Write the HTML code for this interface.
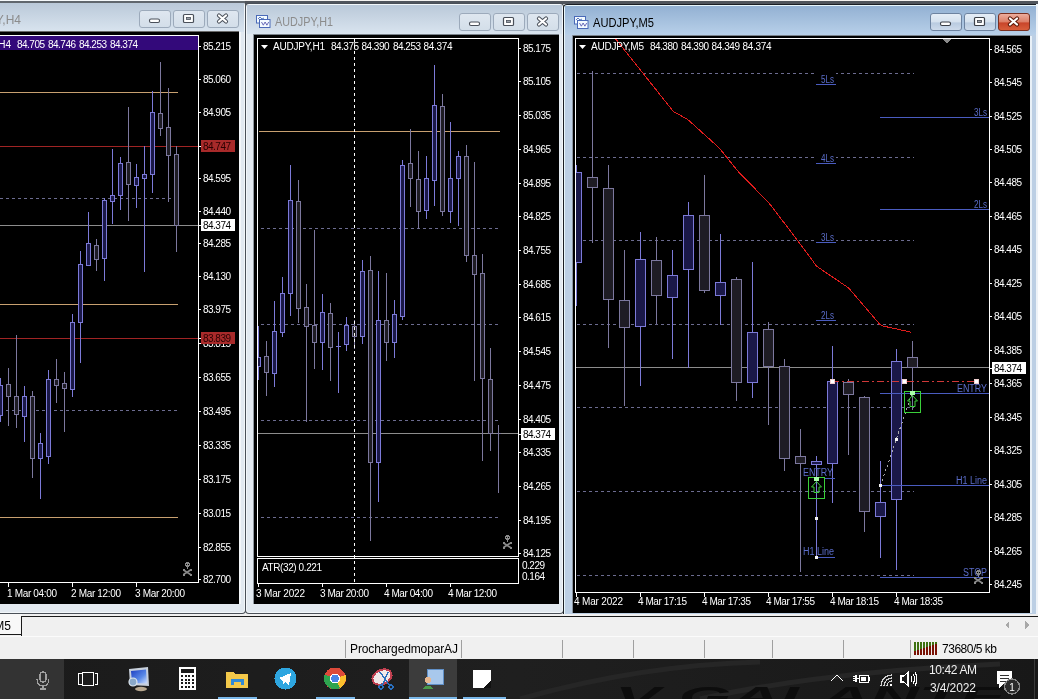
<!DOCTYPE html>
<html><head><meta charset="utf-8"><style>
html,body{margin:0;padding:0;background:#f0f0f0;overflow:hidden}
svg{display:block;will-change:transform}
text{font-family:"Liberation Sans",sans-serif}
</style></head><body>
<svg width="1038" height="699" viewBox="0 0 1038 699" shape-rendering="crispEdges">
<defs>
<linearGradient id="tinact" x1="0" y1="0" x2="0" y2="1"><stop offset="0" stop-color="#bac9d9"/><stop offset="1" stop-color="#d9e4ef"/></linearGradient>
<linearGradient id="tact" x1="0" y1="0" x2="0" y2="1"><stop offset="0" stop-color="#93b1d3"/><stop offset="1" stop-color="#b8d0e9"/></linearGradient>
<linearGradient id="btn" x1="0" y1="0" x2="0" y2="1"><stop offset="0" stop-color="#e6eef7"/><stop offset="0.5" stop-color="#d5e1ee"/><stop offset="0.55" stop-color="#b9cbe0"/><stop offset="1" stop-color="#cfdcec"/></linearGradient>
<linearGradient id="btni" x1="0" y1="0" x2="0" y2="1"><stop offset="0" stop-color="#dfe7f0"/><stop offset="1" stop-color="#d3dee9"/></linearGradient>
<linearGradient id="btnc" x1="0" y1="0" x2="0" y2="1"><stop offset="0" stop-color="#eeb0a0"/><stop offset="0.5" stop-color="#dc7e66"/><stop offset="0.55" stop-color="#c8452a"/><stop offset="1" stop-color="#d9603c"/></linearGradient>
<linearGradient id="topstrip" x1="0" y1="0" x2="0" y2="1"><stop offset="0" stop-color="#f5efea"/><stop offset="0.35" stop-color="#f0eae6"/><stop offset="0.45" stop-color="#2a2c32"/><stop offset="1" stop-color="#3a3c42"/></linearGradient>
<clipPath id="c4"><rect x="0" y="36" width="198" height="546"/></clipPath>
<clipPath id="c1"><rect x="258" y="39" width="260" height="517"/></clipPath>
<clipPath id="c5"><rect x="576" y="39" width="413" height="553"/></clipPath>
</defs>
<rect x="0" y="0" width="1038" height="699" fill="#f0f0f0" />
<rect x="0" y="0" width="1038" height="1" fill="#f4f2f0" />
<rect x="0" y="1" width="1038" height="3" fill="#50555c" />
<rect x="-10" y="1" width="256" height="613" fill="#4a5058" rx="4" shape-rendering="geometricPrecision"/>
<rect x="-9" y="2" width="254" height="611" fill="#f2f6f9" rx="3" shape-rendering="geometricPrecision"/>
<rect x="-8" y="3" width="252" height="609" fill="#e2e9f0" rx="2" shape-rendering="geometricPrecision"/>
<rect x="-8" y="3" width="252" height="29" fill="url(#tinact)" />
<text x="21" y="24" font-family="Liberation Sans" font-size="12" fill="#8c8c8c" text-anchor="end" font-weight="normal" >AUDJPY,H4</text>
<rect x="139.5" y="10.5" width="31" height="17" rx="2.5" fill="url(#btni)" stroke="#9caabb" shape-rendering="geometricPrecision"/>
<rect x="149.5" y="19" width="10" height="3.5" rx="1.5" fill="#fff" stroke="#4a505a" stroke-width="1.1" shape-rendering="geometricPrecision"/>
<rect x="173.5" y="10.5" width="31" height="17" rx="2.5" fill="url(#btni)" stroke="#9caabb" shape-rendering="geometricPrecision"/>
<rect x="183.5" y="14.5" width="10" height="8" rx="1" fill="#fff" stroke="#4a505a" stroke-width="1.2" shape-rendering="geometricPrecision"/>
<rect x="186.5" y="17.5" width="4" height="2" fill="#9aa0a8" stroke="#4a505a" stroke-width="0.8" shape-rendering="geometricPrecision"/>
<rect x="207.5" y="10.5" width="31" height="17" rx="2.5" fill="url(#btni)" stroke="#9caabb" shape-rendering="geometricPrecision"/>
<path d="M219,15.5 L226,21.5 M226,15.5 L219,21.5" stroke="#4a505a" stroke-width="4.2" stroke-linecap="round" shape-rendering="geometricPrecision"/>
<path d="M219,15.5 L226,21.5 M226,15.5 L219,21.5" stroke="#fff" stroke-width="2.2" stroke-linecap="round" shape-rendering="geometricPrecision"/>
<rect x="0" y="0" width="245" height="1" fill="#f4f8fa" />
<rect x="0" y="1" width="245" height="2" fill="#60676e" />
<rect x="245" y="3" width="319" height="611" fill="#4a5058" rx="4" shape-rendering="geometricPrecision"/>
<rect x="246" y="4" width="317" height="609" fill="#f2f6f9" rx="3" shape-rendering="geometricPrecision"/>
<rect x="247" y="5" width="315" height="607" fill="#e2e9f0" rx="2" shape-rendering="geometricPrecision"/>
<rect x="247" y="5" width="315" height="29" fill="url(#tinact)" />
<text x="275" y="26" font-family="Liberation Sans" font-size="12" fill="#8c8c8c" text-anchor="start" font-weight="normal" textLength="58" lengthAdjust="spacingAndGlyphs" >AUDJPY,H1</text>
<rect x="459.5" y="13.5" width="31" height="17" rx="2.5" fill="url(#btni)" stroke="#9caabb" shape-rendering="geometricPrecision"/>
<rect x="469.5" y="22" width="10" height="3.5" rx="1.5" fill="#fff" stroke="#4a505a" stroke-width="1.1" shape-rendering="geometricPrecision"/>
<rect x="493.5" y="13.5" width="31" height="17" rx="2.5" fill="url(#btni)" stroke="#9caabb" shape-rendering="geometricPrecision"/>
<rect x="503.5" y="17.5" width="10" height="8" rx="1" fill="#fff" stroke="#4a505a" stroke-width="1.2" shape-rendering="geometricPrecision"/>
<rect x="506.5" y="20.5" width="4" height="2" fill="#9aa0a8" stroke="#4a505a" stroke-width="0.8" shape-rendering="geometricPrecision"/>
<rect x="527.5" y="13.5" width="31" height="17" rx="2.5" fill="url(#btni)" stroke="#9caabb" shape-rendering="geometricPrecision"/>
<path d="M539,18.5 L546,24.5 M546,18.5 L539,24.5" stroke="#4a505a" stroke-width="4.2" stroke-linecap="round" shape-rendering="geometricPrecision"/>
<path d="M539,18.5 L546,24.5 M546,18.5 L539,24.5" stroke="#fff" stroke-width="2.2" stroke-linecap="round" shape-rendering="geometricPrecision"/>
<rect x="256.5" y="15.5" width="11" height="7.5" fill="#f4fbff" stroke="#4a6ab8" shape-rendering="geometricPrecision"/>
<path d="M258,19 l2,-2 l2,2 l2,-1" stroke="#4a6ab8" fill="none" stroke-width="0.9" shape-rendering="geometricPrecision"/>
<rect x="259.5" y="19.5" width="10.5" height="8" fill="#f4fbff" stroke="#4a6ab8" shape-rendering="geometricPrecision"/>
<path d="M261.5,22 l1.8,3.2 l1.8,-3.2 l1.8,3.2 l1.8,-3.2" stroke="#5a5ab0" fill="none" stroke-width="0.9" shape-rendering="geometricPrecision"/>
<rect x="563" y="4" width="478" height="637" fill="#1a1e24" rx="4" shape-rendering="geometricPrecision"/>
<rect x="564" y="5" width="476" height="635" fill="#e8f6fb" rx="3" shape-rendering="geometricPrecision"/>
<rect x="565" y="6" width="474" height="633" fill="#bccfe4" rx="2" shape-rendering="geometricPrecision"/>
<rect x="565" y="6" width="474" height="29" fill="url(#tact)" />
<text x="593" y="27" font-family="Liberation Sans" font-size="12" fill="#000" text-anchor="start" font-weight="normal" textLength="61" lengthAdjust="spacingAndGlyphs" >AUDJPY,M5</text>
<rect x="930.5" y="13.5" width="31" height="17" rx="2.5" fill="url(#btn)" stroke="#6d83a0" shape-rendering="geometricPrecision"/>
<rect x="940.5" y="22" width="10" height="3.5" rx="1.5" fill="#fff" stroke="#3c4048" stroke-width="1.1" shape-rendering="geometricPrecision"/>
<rect x="964.5" y="13.5" width="31" height="17" rx="2.5" fill="url(#btn)" stroke="#6d83a0" shape-rendering="geometricPrecision"/>
<rect x="974.5" y="17.5" width="10" height="8" rx="1" fill="#fff" stroke="#3c4048" stroke-width="1.2" shape-rendering="geometricPrecision"/>
<rect x="977.5" y="20.5" width="4" height="2" fill="#9aa0a8" stroke="#3c4048" stroke-width="0.8" shape-rendering="geometricPrecision"/>
<rect x="998.5" y="13.5" width="31" height="17" rx="2.5" fill="url(#btnc)" stroke="#7a3020" shape-rendering="geometricPrecision"/>
<path d="M1010,18.5 L1017,24.5 M1017,18.5 L1010,24.5" stroke="#5a1808" stroke-width="4.2" stroke-linecap="round" shape-rendering="geometricPrecision"/>
<path d="M1010,18.5 L1017,24.5 M1017,18.5 L1010,24.5" stroke="#fff" stroke-width="2.2" stroke-linecap="round" shape-rendering="geometricPrecision"/>
<rect x="574.5" y="16.5" width="11" height="7.5" fill="#f4fbff" stroke="#4a6ab8" shape-rendering="geometricPrecision"/>
<path d="M576,20 l2,-2 l2,2 l2,-1" stroke="#4a6ab8" fill="none" stroke-width="0.9" shape-rendering="geometricPrecision"/>
<rect x="577.5" y="20.5" width="10.5" height="8" fill="#f4fbff" stroke="#4a6ab8" shape-rendering="geometricPrecision"/>
<path d="M579.5,23 l1.8,3.2 l1.8,-3.2 l1.8,3.2 l1.8,-3.2" stroke="#5a5ab0" fill="none" stroke-width="0.9" shape-rendering="geometricPrecision"/>
<rect x="1036" y="4" width="2" height="612" fill="#eef3f8" />
<rect x="1030" y="36" width="2" height="577" fill="#e8f0f7" />
<rect x="0" y="31" width="239" height="1" fill="#6a6a6a" />
<rect x="0" y="32" width="239" height="572" fill="#000" />
<rect x="253" y="34" width="306" height="1" fill="#7a828a" />
<rect x="253" y="34" width="1" height="570" fill="#9098a0" />
<rect x="254" y="35" width="305" height="569" fill="#000" />
<rect x="572" y="35" width="458" height="1" fill="#7a828a" />
<rect x="572" y="35" width="1" height="578" fill="#8a94a0" />
<rect x="573" y="36" width="457" height="577" fill="#000" />
<rect x="239" y="32" width="2" height="572" fill="#f2f5f8" />
<g>
<rect x="198" y="35" width="1" height="548" fill="#fff" />
<rect x="0" y="35" width="199" height="1" fill="#fff" />
<rect x="0" y="582" width="199" height="1" fill="#fff" />
<rect x="0" y="36" width="198" height="14" fill="#33097a" />
<text x="11" y="48" font-family="Liberation Sans" font-size="10" fill="#fff" text-anchor="end" font-weight="normal" >H4</text>
<text x="17" y="48" font-family="Liberation Sans" font-size="10" fill="#fff" text-anchor="start" font-weight="normal" textLength="28" lengthAdjust="spacing" >84.705</text>
<text x="48" y="48" font-family="Liberation Sans" font-size="10" fill="#fff" text-anchor="start" font-weight="normal" textLength="28" lengthAdjust="spacing" >84.746</text>
<text x="79" y="48" font-family="Liberation Sans" font-size="10" fill="#fff" text-anchor="start" font-weight="normal" textLength="28" lengthAdjust="spacing" >84.253</text>
<text x="110" y="48" font-family="Liberation Sans" font-size="10" fill="#fff" text-anchor="start" font-weight="normal" textLength="28" lengthAdjust="spacing" >84.374</text>
<g clip-path="url(#c4)">
<rect x="0" y="92" width="178" height="1" fill="#c8a070" />
<rect x="0" y="304" width="178" height="1" fill="#c8a070" />
<rect x="0" y="517" width="178" height="1" fill="#c8a070" />
<rect x="0" y="146" width="198" height="1" fill="#a02424" />
<rect x="0" y="338" width="198" height="1" fill="#a02424" />
<line x1="0" y1="198.5" x2="178" y2="198.5" stroke="#6c6c90" stroke-width="1" stroke-dasharray="3 3"/>
<line x1="0" y1="410.5" x2="178" y2="410.5" stroke="#6c6c90" stroke-width="1" stroke-dasharray="3 3"/>
<rect x="0" y="225" width="198" height="1" fill="#8c8c8c" />
<rect x="0" y="378" width="1" height="44" fill="#7c7ad8" />
<rect x="-2" y="385" width="5" height="31" fill="#7c7ad8" />
<rect x="-1" y="386" width="3" height="29" fill="#1a1848" />
<rect x="8" y="368" width="1" height="58" fill="#7c789e" />
<rect x="6" y="384" width="5" height="13" fill="#7c789e" />
<rect x="7" y="385" width="3" height="11" fill="#1e1c24" />
<rect x="16" y="335" width="1" height="93" fill="#7c789e" />
<rect x="14" y="396" width="5" height="19" fill="#7c789e" />
<rect x="15" y="397" width="3" height="17" fill="#1e1c24" />
<rect x="24" y="386" width="1" height="56" fill="#7c7ad8" />
<rect x="22" y="396" width="5" height="21" fill="#7c7ad8" />
<rect x="23" y="397" width="3" height="19" fill="#1a1848" />
<rect x="32" y="391" width="1" height="87" fill="#7c789e" />
<rect x="30" y="396" width="5" height="63" fill="#7c789e" />
<rect x="31" y="397" width="3" height="61" fill="#1e1c24" />
<rect x="40" y="433" width="1" height="66" fill="#7c7ad8" />
<rect x="38" y="443" width="5" height="16" fill="#7c7ad8" />
<rect x="39" y="444" width="3" height="14" fill="#1a1848" />
<rect x="48" y="370" width="1" height="94" fill="#7c7ad8" />
<rect x="46" y="379" width="5" height="78" fill="#7c7ad8" />
<rect x="47" y="380" width="3" height="76" fill="#1a1848" />
<rect x="56" y="359" width="1" height="44" fill="#7c789e" />
<rect x="54" y="379" width="5" height="7" fill="#7c789e" />
<rect x="55" y="380" width="3" height="5" fill="#1e1c24" />
<rect x="64" y="372" width="1" height="60" fill="#7c789e" />
<rect x="62" y="383" width="5" height="6" fill="#7c789e" />
<rect x="63" y="384" width="3" height="4" fill="#1e1c24" />
<rect x="72" y="314" width="1" height="83" fill="#7c7ad8" />
<rect x="70" y="322" width="5" height="68" fill="#7c7ad8" />
<rect x="71" y="323" width="3" height="66" fill="#1a1848" />
<rect x="80" y="251" width="1" height="112" fill="#7c7ad8" />
<rect x="78" y="264" width="5" height="59" fill="#7c7ad8" />
<rect x="79" y="265" width="3" height="57" fill="#1a1848" />
<rect x="88" y="212" width="1" height="54" fill="#7c7ad8" />
<rect x="86" y="243" width="5" height="23" fill="#7c7ad8" />
<rect x="87" y="244" width="3" height="21" fill="#1a1848" />
<rect x="96" y="239" width="1" height="32" fill="#7c789e" />
<rect x="94" y="245" width="5" height="15" fill="#7c789e" />
<rect x="95" y="246" width="3" height="13" fill="#1e1c24" />
<rect x="104" y="198" width="1" height="83" fill="#7c7ad8" />
<rect x="102" y="200" width="5" height="59" fill="#7c7ad8" />
<rect x="103" y="201" width="3" height="57" fill="#1a1848" />
<rect x="112" y="149" width="1" height="75" fill="#7c7ad8" />
<rect x="110" y="195" width="5" height="7" fill="#7c7ad8" />
<rect x="111" y="196" width="3" height="5" fill="#1a1848" />
<rect x="120" y="157" width="1" height="53" fill="#7c7ad8" />
<rect x="118" y="163" width="5" height="33" fill="#7c7ad8" />
<rect x="119" y="164" width="3" height="31" fill="#1a1848" />
<rect x="128" y="107" width="1" height="114" fill="#7c789e" />
<rect x="126" y="162" width="5" height="23" fill="#7c789e" />
<rect x="127" y="163" width="3" height="21" fill="#1e1c24" />
<rect x="136" y="164" width="1" height="44" fill="#7c7ad8" />
<rect x="134" y="177" width="5" height="9" fill="#7c7ad8" />
<rect x="135" y="178" width="3" height="7" fill="#1a1848" />
<rect x="144" y="146" width="1" height="126" fill="#7c7ad8" />
<rect x="142" y="174" width="5" height="5" fill="#7c7ad8" />
<rect x="143" y="175" width="3" height="3" fill="#1a1848" />
<rect x="152" y="91" width="1" height="102" fill="#7c7ad8" />
<rect x="150" y="112" width="5" height="63" fill="#7c7ad8" />
<rect x="151" y="113" width="3" height="61" fill="#1a1848" />
<rect x="160" y="62" width="1" height="74" fill="#7c789e" />
<rect x="158" y="113" width="5" height="16" fill="#7c789e" />
<rect x="159" y="114" width="3" height="14" fill="#1e1c24" />
<rect x="168" y="88" width="1" height="114" fill="#7c789e" />
<rect x="166" y="127" width="5" height="29" fill="#7c789e" />
<rect x="167" y="128" width="3" height="27" fill="#1e1c24" />
<rect x="176" y="146" width="1" height="106" fill="#7c789e" />
<rect x="174" y="154" width="5" height="72" fill="#7c789e" />
<rect x="175" y="155" width="3" height="70" fill="#1e1c24" />
</g>
<rect x="199" y="46" width="2" height="1" fill="#fff" />
<text x="203" y="50" font-family="Liberation Sans" font-size="10" fill="#fff" text-anchor="start" font-weight="normal" textLength="28" lengthAdjust="spacing" >85.215</text>
<rect x="199" y="79" width="2" height="1" fill="#fff" />
<text x="203" y="83" font-family="Liberation Sans" font-size="10" fill="#fff" text-anchor="start" font-weight="normal" textLength="28" lengthAdjust="spacing" >85.060</text>
<rect x="199" y="112" width="2" height="1" fill="#fff" />
<text x="203" y="116" font-family="Liberation Sans" font-size="10" fill="#fff" text-anchor="start" font-weight="normal" textLength="28" lengthAdjust="spacing" >84.905</text>
<rect x="199" y="178" width="2" height="1" fill="#fff" />
<text x="203" y="182" font-family="Liberation Sans" font-size="10" fill="#fff" text-anchor="start" font-weight="normal" textLength="28" lengthAdjust="spacing" >84.595</text>
<rect x="199" y="211" width="2" height="1" fill="#fff" />
<text x="203" y="215" font-family="Liberation Sans" font-size="10" fill="#fff" text-anchor="start" font-weight="normal" textLength="28" lengthAdjust="spacing" >84.440</text>
<rect x="199" y="243" width="2" height="1" fill="#fff" />
<text x="203" y="247" font-family="Liberation Sans" font-size="10" fill="#fff" text-anchor="start" font-weight="normal" textLength="28" lengthAdjust="spacing" >84.285</text>
<rect x="199" y="276" width="2" height="1" fill="#fff" />
<text x="203" y="280" font-family="Liberation Sans" font-size="10" fill="#fff" text-anchor="start" font-weight="normal" textLength="28" lengthAdjust="spacing" >84.130</text>
<rect x="199" y="309" width="2" height="1" fill="#fff" />
<text x="203" y="313" font-family="Liberation Sans" font-size="10" fill="#fff" text-anchor="start" font-weight="normal" textLength="28" lengthAdjust="spacing" >83.975</text>
<rect x="199" y="343" width="2" height="1" fill="#fff" />
<text x="203" y="347" font-family="Liberation Sans" font-size="10" fill="#fff" text-anchor="start" font-weight="normal" textLength="28" lengthAdjust="spacing" >83.815</text>
<rect x="199" y="377" width="2" height="1" fill="#fff" />
<text x="203" y="381" font-family="Liberation Sans" font-size="10" fill="#fff" text-anchor="start" font-weight="normal" textLength="28" lengthAdjust="spacing" >83.655</text>
<rect x="199" y="411" width="2" height="1" fill="#fff" />
<text x="203" y="415" font-family="Liberation Sans" font-size="10" fill="#fff" text-anchor="start" font-weight="normal" textLength="28" lengthAdjust="spacing" >83.495</text>
<rect x="199" y="445" width="2" height="1" fill="#fff" />
<text x="203" y="449" font-family="Liberation Sans" font-size="10" fill="#fff" text-anchor="start" font-weight="normal" textLength="28" lengthAdjust="spacing" >83.335</text>
<rect x="199" y="479" width="2" height="1" fill="#fff" />
<text x="203" y="483" font-family="Liberation Sans" font-size="10" fill="#fff" text-anchor="start" font-weight="normal" textLength="28" lengthAdjust="spacing" >83.175</text>
<rect x="199" y="513" width="2" height="1" fill="#fff" />
<text x="203" y="517" font-family="Liberation Sans" font-size="10" fill="#fff" text-anchor="start" font-weight="normal" textLength="28" lengthAdjust="spacing" >83.015</text>
<rect x="199" y="547" width="2" height="1" fill="#fff" />
<text x="203" y="551" font-family="Liberation Sans" font-size="10" fill="#fff" text-anchor="start" font-weight="normal" textLength="28" lengthAdjust="spacing" >82.855</text>
<rect x="199" y="579" width="2" height="1" fill="#fff" />
<text x="203" y="583" font-family="Liberation Sans" font-size="10" fill="#fff" text-anchor="start" font-weight="normal" textLength="28" lengthAdjust="spacing" >82.700</text>
<rect x="201" y="140" width="34" height="12" fill="#a82a2a" />
<rect x="199" y="146" width="2" height="1" fill="#fff" />
<text x="203" y="150" font-family="Liberation Sans" font-size="10" fill="#2a0000" text-anchor="start" font-weight="normal" textLength="28" lengthAdjust="spacing" >84.747</text>
<rect x="201" y="219" width="34" height="12" fill="#fff" />
<rect x="199" y="225" width="2" height="1" fill="#fff" />
<text x="203" y="229" font-family="Liberation Sans" font-size="10" fill="#000" text-anchor="start" font-weight="normal" textLength="28" lengthAdjust="spacing" >84.374</text>
<rect x="201" y="332" width="34" height="12" fill="#a82a2a" />
<rect x="199" y="338" width="2" height="1" fill="#fff" />
<text x="203" y="342" font-family="Liberation Sans" font-size="10" fill="#2a0000" text-anchor="start" font-weight="normal" textLength="28" lengthAdjust="spacing" >83.839</text>
<rect x="8" y="583" width="1" height="4" fill="#fff" />
<text x="7" y="597" font-family="Liberation Sans" font-size="10" fill="#fff" text-anchor="start" font-weight="normal" textLength="50" lengthAdjust="spacing" >1 Mar 04:00</text>
<rect x="72" y="583" width="1" height="4" fill="#fff" />
<text x="71" y="597" font-family="Liberation Sans" font-size="10" fill="#fff" text-anchor="start" font-weight="normal" textLength="50" lengthAdjust="spacing" >2 Mar 12:00</text>
<rect x="136" y="583" width="1" height="4" fill="#fff" />
<text x="135" y="597" font-family="Liberation Sans" font-size="10" fill="#fff" text-anchor="start" font-weight="normal" textLength="50" lengthAdjust="spacing" >3 Mar 20:00</text>
</g>
<g>
<rect x="257.5" y="38.5" width="261" height="518" fill="none" stroke="#fff"/>
<rect x="257.5" y="558.5" width="261" height="25" fill="none" stroke="#fff"/>
<g clip-path="url(#c1)">
<rect x="259" y="131" width="241" height="1" fill="#c8a070" />
<line x1="261" y1="228.5" x2="501" y2="228.5" stroke="#6c6c90" stroke-width="1" stroke-dasharray="3 3"/>
<line x1="261" y1="324.5" x2="501" y2="324.5" stroke="#6c6c90" stroke-width="1" stroke-dasharray="3 3"/>
<line x1="261" y1="420.5" x2="501" y2="420.5" stroke="#6c6c90" stroke-width="1" stroke-dasharray="3 3"/>
<line x1="261" y1="517.5" x2="501" y2="517.5" stroke="#6c6c90" stroke-width="1" stroke-dasharray="3 3"/>
<rect x="258" y="433" width="260" height="1" fill="#8c8c8c" />
<rect x="258" y="326" width="1" height="54" fill="#7c7ad8" />
<rect x="256" y="357" width="5" height="10" fill="#7c7ad8" />
<rect x="257" y="358" width="3" height="8" fill="#1a1848" />
<rect x="266" y="341" width="1" height="55" fill="#7c789e" />
<rect x="264" y="356" width="5" height="17" fill="#7c789e" />
<rect x="265" y="357" width="3" height="15" fill="#1e1c24" />
<rect x="274" y="301" width="1" height="86" fill="#7c7ad8" />
<rect x="272" y="331" width="5" height="43" fill="#7c7ad8" />
<rect x="273" y="332" width="3" height="41" fill="#1a1848" />
<rect x="282" y="277" width="1" height="60" fill="#7c7ad8" />
<rect x="280" y="293" width="5" height="40" fill="#7c7ad8" />
<rect x="281" y="294" width="3" height="38" fill="#1a1848" />
<rect x="290" y="165" width="1" height="151" fill="#7c7ad8" />
<rect x="288" y="200" width="5" height="94" fill="#7c7ad8" />
<rect x="289" y="201" width="3" height="92" fill="#1a1848" />
<rect x="298" y="180" width="1" height="143" fill="#7c789e" />
<rect x="296" y="201" width="5" height="108" fill="#7c789e" />
<rect x="297" y="202" width="3" height="106" fill="#1e1c24" />
<rect x="306" y="284" width="1" height="138" fill="#7c789e" />
<rect x="304" y="307" width="5" height="20" fill="#7c789e" />
<rect x="305" y="308" width="3" height="18" fill="#1e1c24" />
<rect x="314" y="230" width="1" height="139" fill="#7c789e" />
<rect x="312" y="325" width="5" height="18" fill="#7c789e" />
<rect x="313" y="326" width="3" height="16" fill="#1e1c24" />
<rect x="322" y="294" width="1" height="76" fill="#7c7ad8" />
<rect x="320" y="312" width="5" height="31" fill="#7c7ad8" />
<rect x="321" y="313" width="3" height="29" fill="#1a1848" />
<rect x="330" y="303" width="1" height="78" fill="#7c789e" />
<rect x="328" y="313" width="5" height="35" fill="#7c789e" />
<rect x="329" y="314" width="3" height="33" fill="#1e1c24" />
<rect x="338" y="332" width="1" height="61" fill="#7c7ad8" />
<rect x="336" y="346" width="5" height="1" fill="#7c7ad8" />
<rect x="346" y="317" width="1" height="34" fill="#7c7ad8" />
<rect x="344" y="325" width="5" height="20" fill="#7c7ad8" />
<rect x="345" y="326" width="3" height="18" fill="#1a1848" />
<rect x="354" y="320" width="1" height="29" fill="#7c789e" />
<rect x="352" y="326" width="5" height="11" fill="#7c789e" />
<rect x="353" y="327" width="3" height="9" fill="#1e1c24" />
<rect x="362" y="260" width="1" height="84" fill="#7c7ad8" />
<rect x="360" y="271" width="5" height="66" fill="#7c7ad8" />
<rect x="361" y="272" width="3" height="64" fill="#1a1848" />
<rect x="370" y="256" width="1" height="285" fill="#7c789e" />
<rect x="368" y="270" width="5" height="193" fill="#7c789e" />
<rect x="369" y="271" width="3" height="191" fill="#1e1c24" />
<rect x="378" y="271" width="1" height="231" fill="#7c7ad8" />
<rect x="376" y="320" width="5" height="143" fill="#7c7ad8" />
<rect x="377" y="321" width="3" height="141" fill="#1a1848" />
<rect x="386" y="273" width="1" height="88" fill="#7c789e" />
<rect x="384" y="320" width="5" height="23" fill="#7c789e" />
<rect x="385" y="321" width="3" height="21" fill="#1e1c24" />
<rect x="394" y="300" width="1" height="58" fill="#7c7ad8" />
<rect x="392" y="314" width="5" height="29" fill="#7c7ad8" />
<rect x="393" y="315" width="3" height="27" fill="#1a1848" />
<rect x="402" y="160" width="1" height="160" fill="#7c7ad8" />
<rect x="400" y="165" width="5" height="152" fill="#7c7ad8" />
<rect x="401" y="166" width="3" height="150" fill="#1a1848" />
<rect x="410" y="129" width="1" height="78" fill="#7c789e" />
<rect x="408" y="163" width="5" height="16" fill="#7c789e" />
<rect x="409" y="164" width="3" height="14" fill="#1e1c24" />
<rect x="418" y="151" width="1" height="78" fill="#7c789e" />
<rect x="416" y="179" width="5" height="33" fill="#7c789e" />
<rect x="417" y="180" width="3" height="31" fill="#1e1c24" />
<rect x="426" y="156" width="1" height="63" fill="#7c7ad8" />
<rect x="424" y="178" width="5" height="33" fill="#7c7ad8" />
<rect x="425" y="179" width="3" height="31" fill="#1a1848" />
<rect x="434" y="65" width="1" height="141" fill="#7c7ad8" />
<rect x="432" y="105" width="5" height="76" fill="#7c7ad8" />
<rect x="433" y="106" width="3" height="74" fill="#1a1848" />
<rect x="442" y="94" width="1" height="122" fill="#7c789e" />
<rect x="440" y="106" width="5" height="106" fill="#7c789e" />
<rect x="441" y="107" width="3" height="104" fill="#1e1c24" />
<rect x="450" y="122" width="1" height="101" fill="#7c7ad8" />
<rect x="448" y="178" width="5" height="34" fill="#7c7ad8" />
<rect x="449" y="179" width="3" height="32" fill="#1a1848" />
<rect x="458" y="151" width="1" height="75" fill="#7c7ad8" />
<rect x="456" y="156" width="5" height="23" fill="#7c7ad8" />
<rect x="457" y="157" width="3" height="21" fill="#1a1848" />
<rect x="466" y="145" width="1" height="117" fill="#7c789e" />
<rect x="464" y="156" width="5" height="100" fill="#7c789e" />
<rect x="465" y="157" width="3" height="98" fill="#1e1c24" />
<rect x="474" y="162" width="1" height="219" fill="#7c789e" />
<rect x="472" y="255" width="5" height="20" fill="#7c789e" />
<rect x="473" y="256" width="3" height="18" fill="#1e1c24" />
<rect x="482" y="254" width="1" height="207" fill="#7c789e" />
<rect x="480" y="273" width="5" height="106" fill="#7c789e" />
<rect x="481" y="274" width="3" height="104" fill="#1e1c24" />
<rect x="490" y="348" width="1" height="103" fill="#7c789e" />
<rect x="488" y="379" width="5" height="55" fill="#7c789e" />
<rect x="489" y="380" width="3" height="53" fill="#1e1c24" />
<rect x="498" y="425" width="1" height="68" fill="#7c789e" />
<rect x="496" y="433" width="5" height="1" fill="#7c789e" />
</g>
<line x1="354.5" y1="39" x2="354.5" y2="583" stroke="#fff" stroke-dasharray="3 3"/>
<path d="M261,45 L268,45 L264.5,49 Z" stroke="none" fill="#fff" stroke-width="1" shape-rendering="geometricPrecision"/>
<text x="273" y="50" font-family="Liberation Sans" font-size="10" fill="#fff" text-anchor="start" font-weight="normal" textLength="52" lengthAdjust="spacing" >AUDJPY,H1</text>
<text x="331" y="50" font-family="Liberation Sans" font-size="10" fill="#fff" text-anchor="start" font-weight="normal" textLength="28" lengthAdjust="spacing" >84.375</text>
<text x="361.5" y="50" font-family="Liberation Sans" font-size="10" fill="#fff" text-anchor="start" font-weight="normal" textLength="28" lengthAdjust="spacing" >84.390</text>
<text x="393" y="50" font-family="Liberation Sans" font-size="10" fill="#fff" text-anchor="start" font-weight="normal" textLength="28" lengthAdjust="spacing" >84.253</text>
<text x="423.5" y="50" font-family="Liberation Sans" font-size="10" fill="#fff" text-anchor="start" font-weight="normal" textLength="29" lengthAdjust="spacing" >84.374</text>
<rect x="519" y="48" width="2" height="1" fill="#fff" />
<text x="523" y="52" font-family="Liberation Sans" font-size="10" fill="#fff" text-anchor="start" font-weight="normal" textLength="28" lengthAdjust="spacing" >85.175</text>
<rect x="519" y="81" width="2" height="1" fill="#fff" />
<text x="523" y="85" font-family="Liberation Sans" font-size="10" fill="#fff" text-anchor="start" font-weight="normal" textLength="28" lengthAdjust="spacing" >85.105</text>
<rect x="519" y="115" width="2" height="1" fill="#fff" />
<text x="523" y="119" font-family="Liberation Sans" font-size="10" fill="#fff" text-anchor="start" font-weight="normal" textLength="28" lengthAdjust="spacing" >85.035</text>
<rect x="519" y="149" width="2" height="1" fill="#fff" />
<text x="523" y="153" font-family="Liberation Sans" font-size="10" fill="#fff" text-anchor="start" font-weight="normal" textLength="28" lengthAdjust="spacing" >84.965</text>
<rect x="519" y="183" width="2" height="1" fill="#fff" />
<text x="523" y="187" font-family="Liberation Sans" font-size="10" fill="#fff" text-anchor="start" font-weight="normal" textLength="28" lengthAdjust="spacing" >84.895</text>
<rect x="519" y="216" width="2" height="1" fill="#fff" />
<text x="523" y="220" font-family="Liberation Sans" font-size="10" fill="#fff" text-anchor="start" font-weight="normal" textLength="28" lengthAdjust="spacing" >84.825</text>
<rect x="519" y="250" width="2" height="1" fill="#fff" />
<text x="523" y="254" font-family="Liberation Sans" font-size="10" fill="#fff" text-anchor="start" font-weight="normal" textLength="28" lengthAdjust="spacing" >84.755</text>
<rect x="519" y="284" width="2" height="1" fill="#fff" />
<text x="523" y="288" font-family="Liberation Sans" font-size="10" fill="#fff" text-anchor="start" font-weight="normal" textLength="28" lengthAdjust="spacing" >84.685</text>
<rect x="519" y="317" width="2" height="1" fill="#fff" />
<text x="523" y="321" font-family="Liberation Sans" font-size="10" fill="#fff" text-anchor="start" font-weight="normal" textLength="28" lengthAdjust="spacing" >84.615</text>
<rect x="519" y="351" width="2" height="1" fill="#fff" />
<text x="523" y="355" font-family="Liberation Sans" font-size="10" fill="#fff" text-anchor="start" font-weight="normal" textLength="28" lengthAdjust="spacing" >84.545</text>
<rect x="519" y="385" width="2" height="1" fill="#fff" />
<text x="523" y="389" font-family="Liberation Sans" font-size="10" fill="#fff" text-anchor="start" font-weight="normal" textLength="28" lengthAdjust="spacing" >84.475</text>
<rect x="519" y="419" width="2" height="1" fill="#fff" />
<text x="523" y="423" font-family="Liberation Sans" font-size="10" fill="#fff" text-anchor="start" font-weight="normal" textLength="28" lengthAdjust="spacing" >84.405</text>
<rect x="519" y="452" width="2" height="1" fill="#fff" />
<text x="523" y="456" font-family="Liberation Sans" font-size="10" fill="#fff" text-anchor="start" font-weight="normal" textLength="28" lengthAdjust="spacing" >84.335</text>
<rect x="519" y="486" width="2" height="1" fill="#fff" />
<text x="523" y="490" font-family="Liberation Sans" font-size="10" fill="#fff" text-anchor="start" font-weight="normal" textLength="28" lengthAdjust="spacing" >84.265</text>
<rect x="519" y="520" width="2" height="1" fill="#fff" />
<text x="523" y="524" font-family="Liberation Sans" font-size="10" fill="#fff" text-anchor="start" font-weight="normal" textLength="28" lengthAdjust="spacing" >84.195</text>
<rect x="519" y="553" width="2" height="1" fill="#fff" />
<text x="523" y="557" font-family="Liberation Sans" font-size="10" fill="#fff" text-anchor="start" font-weight="normal" textLength="28" lengthAdjust="spacing" >84.125</text>
<rect x="521" y="428" width="34" height="12" fill="#fff" />
<rect x="519" y="434" width="2" height="1" fill="#fff" />
<text x="523" y="438" font-family="Liberation Sans" font-size="10" fill="#000" text-anchor="start" font-weight="normal" textLength="28" lengthAdjust="spacing" >84.374</text>
<text x="262" y="571" font-family="Liberation Sans" font-size="10" fill="#fff" text-anchor="start" font-weight="normal" textLength="60" lengthAdjust="spacing" >ATR(32) 0.221</text>
<text x="522" y="569" font-family="Liberation Sans" font-size="10" fill="#fff" text-anchor="start" font-weight="normal" textLength="23" lengthAdjust="spacing" >0.229</text>
<text x="522" y="580" font-family="Liberation Sans" font-size="10" fill="#fff" text-anchor="start" font-weight="normal" textLength="23" lengthAdjust="spacing" >0.164</text>
<rect x="258" y="584" width="1" height="3" fill="#fff" />
<text x="256" y="597" font-family="Liberation Sans" font-size="10" fill="#fff" text-anchor="start" font-weight="normal" textLength="49" lengthAdjust="spacing" >3 Mar 2022</text>
<rect x="322" y="584" width="1" height="3" fill="#fff" />
<text x="320" y="597" font-family="Liberation Sans" font-size="10" fill="#fff" text-anchor="start" font-weight="normal" textLength="49" lengthAdjust="spacing" >3 Mar 20:00</text>
<rect x="386" y="584" width="1" height="3" fill="#fff" />
<text x="384" y="597" font-family="Liberation Sans" font-size="10" fill="#fff" text-anchor="start" font-weight="normal" textLength="49" lengthAdjust="spacing" >4 Mar 04:00</text>
<rect x="450" y="584" width="1" height="3" fill="#fff" />
<text x="448" y="597" font-family="Liberation Sans" font-size="10" fill="#fff" text-anchor="start" font-weight="normal" textLength="49" lengthAdjust="spacing" >4 Mar 12:00</text>
</g>
<g>
<rect x="575.5" y="38.5" width="414" height="554" fill="none" stroke="#fff"/>
<g clip-path="url(#c5)">
<line x1="577" y1="73.5" x2="914" y2="73.5" stroke="#6c6c90" stroke-width="1" stroke-dasharray="3 3"/>
<line x1="577" y1="157.5" x2="914" y2="157.5" stroke="#6c6c90" stroke-width="1" stroke-dasharray="3 3"/>
<line x1="577" y1="240.5" x2="914" y2="240.5" stroke="#6c6c90" stroke-width="1" stroke-dasharray="3 3"/>
<line x1="577" y1="324.5" x2="914" y2="324.5" stroke="#6c6c90" stroke-width="1" stroke-dasharray="3 3"/>
<line x1="577" y1="407.5" x2="914" y2="407.5" stroke="#6c6c90" stroke-width="1" stroke-dasharray="3 3"/>
<line x1="577" y1="491.5" x2="914" y2="491.5" stroke="#6c6c90" stroke-width="1" stroke-dasharray="3 3"/>
<line x1="577" y1="575.5" x2="914" y2="575.5" stroke="#6c6c90" stroke-width="1" stroke-dasharray="3 3"/>
<rect x="576" y="367" width="413" height="1" fill="#8c8c8c" />
<rect x="576" y="165" width="1" height="141" fill="#7c7ad8" />
<rect x="571" y="172" width="11" height="91" fill="#7c7ad8" />
<rect x="572" y="173" width="9" height="89" fill="#1a1848" />
<rect x="592" y="71" width="1" height="172" fill="#7c789e" />
<rect x="587" y="177" width="11" height="11" fill="#7c789e" />
<rect x="588" y="178" width="9" height="9" fill="#1e1c24" />
<rect x="608" y="165" width="1" height="183" fill="#7c789e" />
<rect x="603" y="188" width="11" height="112" fill="#7c789e" />
<rect x="604" y="189" width="9" height="110" fill="#1e1c24" />
<rect x="624" y="250" width="1" height="156" fill="#7c789e" />
<rect x="619" y="300" width="11" height="28" fill="#7c789e" />
<rect x="620" y="301" width="9" height="26" fill="#1e1c24" />
<rect x="640" y="232" width="1" height="154" fill="#7c7ad8" />
<rect x="635" y="259" width="11" height="68" fill="#7c7ad8" />
<rect x="636" y="260" width="9" height="66" fill="#1a1848" />
<rect x="656" y="237" width="1" height="87" fill="#7c789e" />
<rect x="651" y="260" width="11" height="36" fill="#7c789e" />
<rect x="652" y="261" width="9" height="34" fill="#1e1c24" />
<rect x="672" y="250" width="1" height="109" fill="#7c7ad8" />
<rect x="667" y="275" width="11" height="23" fill="#7c7ad8" />
<rect x="668" y="276" width="9" height="21" fill="#1a1848" />
<rect x="688" y="202" width="1" height="166" fill="#7c7ad8" />
<rect x="683" y="215" width="11" height="55" fill="#7c7ad8" />
<rect x="684" y="216" width="9" height="53" fill="#1a1848" />
<rect x="704" y="175" width="1" height="118" fill="#7c789e" />
<rect x="699" y="215" width="11" height="76" fill="#7c789e" />
<rect x="700" y="216" width="9" height="74" fill="#1e1c24" />
<rect x="720" y="234" width="1" height="91" fill="#7c7ad8" />
<rect x="715" y="282" width="11" height="14" fill="#7c7ad8" />
<rect x="716" y="283" width="9" height="12" fill="#1a1848" />
<rect x="736" y="277" width="1" height="124" fill="#7c789e" />
<rect x="731" y="279" width="11" height="104" fill="#7c789e" />
<rect x="732" y="280" width="9" height="102" fill="#1e1c24" />
<rect x="752" y="262" width="1" height="136" fill="#7c7ad8" />
<rect x="747" y="332" width="11" height="51" fill="#7c7ad8" />
<rect x="748" y="333" width="9" height="49" fill="#1a1848" />
<rect x="768" y="322" width="1" height="103" fill="#7c789e" />
<rect x="763" y="329" width="11" height="38" fill="#7c789e" />
<rect x="764" y="330" width="9" height="36" fill="#1e1c24" />
<rect x="784" y="359" width="1" height="112" fill="#7c789e" />
<rect x="779" y="366" width="11" height="93" fill="#7c789e" />
<rect x="780" y="367" width="9" height="91" fill="#1e1c24" />
<rect x="800" y="429" width="1" height="143" fill="#7c789e" />
<rect x="795" y="456" width="11" height="8" fill="#7c789e" />
<rect x="796" y="457" width="9" height="6" fill="#1e1c24" />
<rect x="816" y="456" width="1" height="103" fill="#7c7ad8" />
<rect x="811" y="461" width="11" height="4" fill="#7c7ad8" />
<rect x="812" y="462" width="9" height="2" fill="#1a1848" />
<rect x="832" y="346" width="1" height="157" fill="#7c7ad8" />
<rect x="827" y="381" width="11" height="83" fill="#7c7ad8" />
<rect x="828" y="382" width="9" height="81" fill="#1a1848" />
<rect x="848" y="379" width="1" height="76" fill="#7c789e" />
<rect x="843" y="382" width="11" height="13" fill="#7c789e" />
<rect x="844" y="383" width="9" height="11" fill="#1e1c24" />
<rect x="864" y="396" width="1" height="136" fill="#7c789e" />
<rect x="859" y="397" width="11" height="115" fill="#7c789e" />
<rect x="860" y="398" width="9" height="113" fill="#1e1c24" />
<rect x="880" y="461" width="1" height="97" fill="#7c7ad8" />
<rect x="875" y="502" width="11" height="15" fill="#7c7ad8" />
<rect x="876" y="503" width="9" height="13" fill="#1a1848" />
<rect x="896" y="349" width="1" height="221" fill="#7c7ad8" />
<rect x="891" y="361" width="11" height="139" fill="#7c7ad8" />
<rect x="892" y="362" width="9" height="137" fill="#1a1848" />
<rect x="912" y="341" width="1" height="69" fill="#7c789e" />
<rect x="907" y="357" width="11" height="11" fill="#7c789e" />
<rect x="908" y="358" width="9" height="9" fill="#1e1c24" />
<path d="M612,34 L614.6,37.6 L673.4,111.5 L687.6,119.4 L719,147.7 L738,171.3 L769,203 L797.7,240.6 L816.7,266.3 L848.7,288 L880,324.5 L883,326 L911.5,332.3" stroke="#e01c1c" fill="none" stroke-width="1" />
<rect x="880" y="117" width="109" height="1" fill="#4a5cc0" />
<text x="987" y="116" font-family="Liberation Sans" font-size="10" fill="#5a6cc8" text-anchor="end" font-weight="normal" textLength="13" lengthAdjust="spacingAndGlyphs" >3Ls</text>
<rect x="880" y="209" width="109" height="1" fill="#4a5cc0" />
<text x="987" y="208" font-family="Liberation Sans" font-size="10" fill="#5a6cc8" text-anchor="end" font-weight="normal" textLength="13" lengthAdjust="spacingAndGlyphs" >2Ls</text>
<rect x="880" y="393" width="109" height="1" fill="#4a5cc0" />
<text x="987" y="392" font-family="Liberation Sans" font-size="10" fill="#5a6cc8" text-anchor="end" font-weight="normal" textLength="30" lengthAdjust="spacingAndGlyphs" >ENTRY</text>
<rect x="880" y="485" width="109" height="1" fill="#4a5cc0" />
<text x="987" y="484" font-family="Liberation Sans" font-size="10" fill="#5a6cc8" text-anchor="end" font-weight="normal" textLength="31" lengthAdjust="spacingAndGlyphs" >H1 Line</text>
<rect x="880" y="577" width="109" height="1" fill="#4a5cc0" />
<text x="987" y="576" font-family="Liberation Sans" font-size="10" fill="#5a6cc8" text-anchor="end" font-weight="normal" textLength="24" lengthAdjust="spacingAndGlyphs" >STOP</text>
<rect x="816" y="73" width="20" height="11" fill="#000" />
<rect x="816" y="84" width="20" height="1" fill="#4a5cc0" />
<text x="834" y="83" font-family="Liberation Sans" font-size="10" fill="#5a6cc8" text-anchor="end" font-weight="normal" textLength="13" lengthAdjust="spacingAndGlyphs" >5Ls</text>
<rect x="816" y="152" width="20" height="11" fill="#000" />
<rect x="816" y="163" width="20" height="1" fill="#4a5cc0" />
<text x="834" y="162" font-family="Liberation Sans" font-size="10" fill="#5a6cc8" text-anchor="end" font-weight="normal" textLength="13" lengthAdjust="spacingAndGlyphs" >4Ls</text>
<rect x="816" y="231" width="20" height="11" fill="#000" />
<rect x="816" y="242" width="20" height="1" fill="#4a5cc0" />
<text x="834" y="241" font-family="Liberation Sans" font-size="10" fill="#5a6cc8" text-anchor="end" font-weight="normal" textLength="13" lengthAdjust="spacingAndGlyphs" >3Ls</text>
<rect x="816" y="309" width="20" height="11" fill="#000" />
<rect x="816" y="320" width="20" height="1" fill="#4a5cc0" />
<text x="834" y="319" font-family="Liberation Sans" font-size="10" fill="#5a6cc8" text-anchor="end" font-weight="normal" textLength="13" lengthAdjust="spacingAndGlyphs" >2Ls</text>
<text x="803" y="476" font-family="Liberation Sans" font-size="10" fill="#5a6cc8" text-anchor="start" font-weight="normal" textLength="30" lengthAdjust="spacingAndGlyphs" >ENTRY</text>
<rect x="824" y="478" width="11" height="1" fill="#4a5cc0" />
<text x="803" y="555" font-family="Liberation Sans" font-size="10" fill="#5a6cc8" text-anchor="start" font-weight="normal" textLength="31" lengthAdjust="spacingAndGlyphs" >H1 Line</text>
<rect x="816" y="557" width="19" height="1" fill="#4a5cc0" />
<line x1="832" y1="381.5" x2="976" y2="381.5" stroke="#d03838" stroke-width="1" stroke-dasharray="7 3 2 3"/>
<rect x="830" y="379" width="5" height="5" fill="#f0d0d0" />
<rect x="831" y="380" width="3" height="3" fill="#fff" />
<rect x="902" y="379" width="5" height="5" fill="#f0d0d0" />
<rect x="903" y="380" width="3" height="3" fill="#fff" />
<rect x="974" y="379" width="5" height="5" fill="#f0d0d0" />
<rect x="975" y="380" width="3" height="3" fill="#fff" />
<line x1="880.5" y1="485.5" x2="912.5" y2="392" stroke="#a8a8a8" stroke-width="1" stroke-dasharray="2 3"/>
<rect x="879" y="484" width="3" height="3" fill="#f4f4f4" />
<rect x="895" y="438" width="3" height="3" fill="#f4f4f4" />
<rect x="815" y="517" width="3" height="3" fill="#f4f4f4" />
<rect x="815" y="556" width="3" height="3" fill="#f4f4f4" />
<rect x="808.5" y="477.5" width="16" height="21" fill="none" stroke="#3ad03a"/>
<path d="M816.5,481.5 L821.5,487 L819.0,487 L819.0,492.5 L814.0,492.5 L814.0,487 L811.5,487 Z" fill="none" stroke="#3ad03a" stroke-width="1" shape-rendering="geometricPrecision"/>
<rect x="814" y="477" width="5" height="4" fill="#a8ffa8" />
<rect x="904.5" y="391.5" width="16" height="21" fill="none" stroke="#3ad03a"/>
<path d="M912.5,395.5 L917.5,401 L915.0,401 L915.0,406.5 L910.0,406.5 L910.0,401 L907.5,401 Z" fill="none" stroke="#3ad03a" stroke-width="1" shape-rendering="geometricPrecision"/>
<rect x="910" y="391" width="5" height="4" fill="#a8ffa8" />
</g>
<path d="M942,39 L951,39 L946.5,43.5 Z" stroke="none" fill="#8a8a8a" stroke-width="1" />
<path d="M579,45 L586,45 L582.5,49 Z" stroke="none" fill="#fff" stroke-width="1" shape-rendering="geometricPrecision"/>
<text x="591" y="50" font-family="Liberation Sans" font-size="10" fill="#fff" text-anchor="start" font-weight="normal" textLength="53" lengthAdjust="spacing" >AUDJPY,M5</text>
<text x="650" y="50" font-family="Liberation Sans" font-size="10" fill="#fff" text-anchor="start" font-weight="normal" textLength="28" lengthAdjust="spacing" >84.380</text>
<text x="681" y="50" font-family="Liberation Sans" font-size="10" fill="#fff" text-anchor="start" font-weight="normal" textLength="28" lengthAdjust="spacing" >84.390</text>
<text x="711.5" y="50" font-family="Liberation Sans" font-size="10" fill="#fff" text-anchor="start" font-weight="normal" textLength="28.5" lengthAdjust="spacing" >84.349</text>
<text x="742.5" y="50" font-family="Liberation Sans" font-size="10" fill="#fff" text-anchor="start" font-weight="normal" textLength="29" lengthAdjust="spacing" >84.374</text>
<rect x="990" y="49" width="2" height="1" fill="#fff" />
<text x="994" y="53" font-family="Liberation Sans" font-size="10" fill="#fff" text-anchor="start" font-weight="normal" textLength="28" lengthAdjust="spacing" >84.565</text>
<rect x="990" y="82" width="2" height="1" fill="#fff" />
<text x="994" y="86" font-family="Liberation Sans" font-size="10" fill="#fff" text-anchor="start" font-weight="normal" textLength="28" lengthAdjust="spacing" >84.545</text>
<rect x="990" y="116" width="2" height="1" fill="#fff" />
<text x="994" y="120" font-family="Liberation Sans" font-size="10" fill="#fff" text-anchor="start" font-weight="normal" textLength="28" lengthAdjust="spacing" >84.525</text>
<rect x="990" y="149" width="2" height="1" fill="#fff" />
<text x="994" y="153" font-family="Liberation Sans" font-size="10" fill="#fff" text-anchor="start" font-weight="normal" textLength="28" lengthAdjust="spacing" >84.505</text>
<rect x="990" y="182" width="2" height="1" fill="#fff" />
<text x="994" y="186" font-family="Liberation Sans" font-size="10" fill="#fff" text-anchor="start" font-weight="normal" textLength="28" lengthAdjust="spacing" >84.485</text>
<rect x="990" y="216" width="2" height="1" fill="#fff" />
<text x="994" y="220" font-family="Liberation Sans" font-size="10" fill="#fff" text-anchor="start" font-weight="normal" textLength="28" lengthAdjust="spacing" >84.465</text>
<rect x="990" y="249" width="2" height="1" fill="#fff" />
<text x="994" y="253" font-family="Liberation Sans" font-size="10" fill="#fff" text-anchor="start" font-weight="normal" textLength="28" lengthAdjust="spacing" >84.445</text>
<rect x="990" y="283" width="2" height="1" fill="#fff" />
<text x="994" y="287" font-family="Liberation Sans" font-size="10" fill="#fff" text-anchor="start" font-weight="normal" textLength="28" lengthAdjust="spacing" >84.425</text>
<rect x="990" y="316" width="2" height="1" fill="#fff" />
<text x="994" y="320" font-family="Liberation Sans" font-size="10" fill="#fff" text-anchor="start" font-weight="normal" textLength="28" lengthAdjust="spacing" >84.405</text>
<rect x="990" y="350" width="2" height="1" fill="#fff" />
<text x="994" y="354" font-family="Liberation Sans" font-size="10" fill="#fff" text-anchor="start" font-weight="normal" textLength="28" lengthAdjust="spacing" >84.385</text>
<rect x="990" y="383" width="2" height="1" fill="#fff" />
<text x="994" y="387" font-family="Liberation Sans" font-size="10" fill="#fff" text-anchor="start" font-weight="normal" textLength="28" lengthAdjust="spacing" >84.365</text>
<rect x="990" y="417" width="2" height="1" fill="#fff" />
<text x="994" y="421" font-family="Liberation Sans" font-size="10" fill="#fff" text-anchor="start" font-weight="normal" textLength="28" lengthAdjust="spacing" >84.345</text>
<rect x="990" y="450" width="2" height="1" fill="#fff" />
<text x="994" y="454" font-family="Liberation Sans" font-size="10" fill="#fff" text-anchor="start" font-weight="normal" textLength="28" lengthAdjust="spacing" >84.325</text>
<rect x="990" y="484" width="2" height="1" fill="#fff" />
<text x="994" y="488" font-family="Liberation Sans" font-size="10" fill="#fff" text-anchor="start" font-weight="normal" textLength="28" lengthAdjust="spacing" >84.305</text>
<rect x="990" y="517" width="2" height="1" fill="#fff" />
<text x="994" y="521" font-family="Liberation Sans" font-size="10" fill="#fff" text-anchor="start" font-weight="normal" textLength="28" lengthAdjust="spacing" >84.285</text>
<rect x="990" y="551" width="2" height="1" fill="#fff" />
<text x="994" y="555" font-family="Liberation Sans" font-size="10" fill="#fff" text-anchor="start" font-weight="normal" textLength="28" lengthAdjust="spacing" >84.265</text>
<rect x="990" y="584" width="2" height="1" fill="#fff" />
<text x="994" y="588" font-family="Liberation Sans" font-size="10" fill="#fff" text-anchor="start" font-weight="normal" textLength="28" lengthAdjust="spacing" >84.245</text>
<rect x="992" y="362" width="34" height="12" fill="#fff" />
<rect x="990" y="368" width="2" height="1" fill="#fff" />
<text x="994" y="372" font-family="Liberation Sans" font-size="10" fill="#000" text-anchor="start" font-weight="normal" textLength="28" lengthAdjust="spacing" >84.374</text>
<rect x="576" y="593" width="1" height="4" fill="#fff" />
<text x="574" y="605" font-family="Liberation Sans" font-size="10" fill="#fff" text-anchor="start" font-weight="normal" textLength="49" lengthAdjust="spacing" >4 Mar 2022</text>
<rect x="640" y="593" width="1" height="4" fill="#fff" />
<text x="638" y="605" font-family="Liberation Sans" font-size="10" fill="#fff" text-anchor="start" font-weight="normal" textLength="49" lengthAdjust="spacing" >4 Mar 17:15</text>
<rect x="704" y="593" width="1" height="4" fill="#fff" />
<text x="702" y="605" font-family="Liberation Sans" font-size="10" fill="#fff" text-anchor="start" font-weight="normal" textLength="49" lengthAdjust="spacing" >4 Mar 17:35</text>
<rect x="768" y="593" width="1" height="4" fill="#fff" />
<text x="766" y="605" font-family="Liberation Sans" font-size="10" fill="#fff" text-anchor="start" font-weight="normal" textLength="49" lengthAdjust="spacing" >4 Mar 17:55</text>
<rect x="832" y="593" width="1" height="4" fill="#fff" />
<text x="830" y="605" font-family="Liberation Sans" font-size="10" fill="#fff" text-anchor="start" font-weight="normal" textLength="49" lengthAdjust="spacing" >4 Mar 18:15</text>
<rect x="896" y="593" width="1" height="4" fill="#fff" />
<text x="894" y="605" font-family="Liberation Sans" font-size="10" fill="#fff" text-anchor="start" font-weight="normal" textLength="49" lengthAdjust="spacing" >4 Mar 18:35</text>
</g>
<rect x="186" y="562" width="3" height="1" fill="#8a8a8a" />
<rect x="185" y="563" width="5" height="3" fill="#8a8a8a" />
<rect x="186" y="566" width="3" height="1" fill="#8a8a8a" />
<rect x="186" y="564" width="1" height="1" fill="#000" />
<rect x="188" y="564" width="1" height="1" fill="#000" />
<rect x="187" y="567" width="1" height="2" fill="#8a8a8a" />
<path d="M183.5,570 L190.5,574.5 M190.5,570 L183.5,574.5" stroke="#8a8a8a" stroke-width="1.6" fill="none" shape-rendering="geometricPrecision"/>
<rect x="183" y="569" width="2" height="2" fill="#8a8a8a" />
<rect x="190" y="569" width="2" height="2" fill="#8a8a8a" />
<rect x="183" y="574" width="2" height="2" fill="#8a8a8a" />
<rect x="190" y="574" width="2" height="2" fill="#8a8a8a" />
<rect x="506" y="535" width="3" height="1" fill="#8a8a8a" />
<rect x="505" y="536" width="5" height="3" fill="#8a8a8a" />
<rect x="506" y="539" width="3" height="1" fill="#8a8a8a" />
<rect x="506" y="537" width="1" height="1" fill="#000" />
<rect x="508" y="537" width="1" height="1" fill="#000" />
<rect x="507" y="540" width="1" height="2" fill="#8a8a8a" />
<path d="M503.5,543 L510.5,547.5 M510.5,543 L503.5,547.5" stroke="#8a8a8a" stroke-width="1.6" fill="none" shape-rendering="geometricPrecision"/>
<rect x="503" y="542" width="2" height="2" fill="#8a8a8a" />
<rect x="510" y="542" width="2" height="2" fill="#8a8a8a" />
<rect x="503" y="547" width="2" height="2" fill="#8a8a8a" />
<rect x="510" y="547" width="2" height="2" fill="#8a8a8a" />
<rect x="977" y="570" width="3" height="1" fill="#8a8a8a" />
<rect x="976" y="571" width="5" height="3" fill="#8a8a8a" />
<rect x="977" y="574" width="3" height="1" fill="#8a8a8a" />
<rect x="977" y="572" width="1" height="1" fill="#000" />
<rect x="979" y="572" width="1" height="1" fill="#000" />
<rect x="978" y="575" width="1" height="2" fill="#8a8a8a" />
<path d="M974.5,578 L981.5,582.5 M981.5,578 L974.5,582.5" stroke="#8a8a8a" stroke-width="1.6" fill="none" shape-rendering="geometricPrecision"/>
<rect x="974" y="577" width="2" height="2" fill="#8a8a8a" />
<rect x="981" y="577" width="2" height="2" fill="#8a8a8a" />
<rect x="974" y="582" width="2" height="2" fill="#8a8a8a" />
<rect x="981" y="582" width="2" height="2" fill="#8a8a8a" />
<rect x="0" y="614" width="1038" height="2" fill="#f0f0f0" />
<rect x="0" y="616" width="1038" height="1" fill="#1a1a1a" />
<rect x="0" y="617" width="1038" height="19" fill="#f0f0f0" />
<rect x="0" y="614" width="22" height="21" fill="#f8f8f8" />
<rect x="21" y="616" width="1" height="20" fill="#1a1a1a" />
<rect x="0" y="634" width="22" height="1" fill="#1a1a1a" />
<rect x="22" y="616" width="1016" height="1" fill="#1a1a1a" />
<text x="11" y="630" font-family="Liberation Sans" font-size="12" fill="#000" text-anchor="end" font-weight="normal" >M5</text>
<rect x="0" y="636" width="1038" height="1" fill="#fbfbfb" />
<rect x="0" y="637" width="1038" height="22" fill="#f0f0f0" />
<path d="M1009,621 L1005,625 L1009,629 Z" stroke="none" fill="#a8a8a8" stroke-width="1" />
<path d="M1025,621 L1029,625 L1025,629 Z" stroke="none" fill="#a8a8a8" stroke-width="1" />
<rect x="345" y="640" width="1" height="18" fill="#a0a0a0" />
<rect x="461" y="640" width="1" height="18" fill="#a0a0a0" />
<rect x="562" y="640" width="1" height="18" fill="#a0a0a0" />
<rect x="633" y="640" width="1" height="18" fill="#a0a0a0" />
<rect x="704" y="640" width="1" height="18" fill="#a0a0a0" />
<rect x="772" y="640" width="1" height="18" fill="#a0a0a0" />
<rect x="843" y="640" width="1" height="18" fill="#a0a0a0" />
<rect x="910" y="640" width="1" height="18" fill="#a0a0a0" />
<text x="350" y="653" font-family="Liberation Sans" font-size="12" fill="#000" text-anchor="start" font-weight="normal" textLength="108" lengthAdjust="spacing" >ProchargedmoparAJ</text>
<rect x="914" y="642" width="2" height="9" fill="#3f7212" />
<rect x="914" y="651" width="2" height="4" fill="#7a1204" />
<rect x="917" y="642" width="2" height="8" fill="#3f7212" />
<rect x="917" y="650" width="2" height="5" fill="#7a1204" />
<rect x="920" y="642" width="2" height="7" fill="#3f7212" />
<rect x="920" y="649" width="2" height="6" fill="#7a1204" />
<rect x="923" y="642" width="2" height="6" fill="#3f7212" />
<rect x="923" y="648" width="2" height="7" fill="#7a1204" />
<rect x="926" y="642" width="2" height="5" fill="#3f7212" />
<rect x="926" y="647" width="2" height="8" fill="#7a1204" />
<rect x="929" y="642" width="2" height="4" fill="#3f7212" />
<rect x="929" y="646" width="2" height="9" fill="#7a1204" />
<rect x="932" y="642" width="2" height="3" fill="#3f7212" />
<rect x="932" y="645" width="2" height="10" fill="#7a1204" />
<rect x="935" y="642" width="2" height="2" fill="#3f7212" />
<rect x="935" y="644" width="2" height="11" fill="#7a1204" />
<text x="942" y="653" font-family="Liberation Sans" font-size="12" fill="#000" text-anchor="start" font-weight="normal" textLength="55" lengthAdjust="spacing" >73680/5 kb</text>
<linearGradient id="tb" x1="0" y1="0" x2="1" y2="0"><stop offset="0" stop-color="#1b1b1b"/><stop offset="0.5" stop-color="#1f1f1f"/><stop offset="1" stop-color="#181818"/></linearGradient>
<rect x="0" y="659" width="1038" height="40" fill="url(#tb)" />
<rect x="0" y="659" width="64" height="40" fill="#333333" />
<path d="M520,699 Q640,665 760,662 M700,699 Q820,672 1000,664" stroke="#262626" fill="none" stroke-width="5" shape-rendering="geometricPrecision"/>
<text x="615" y="706" font-family="Liberation Sans" font-size="27" fill="#0d0d0d" text-anchor="start" font-weight="bold" textLength="390" lengthAdjust="spacingAndGlyphs" font-style="italic">V GALANTE</text>
<rect x="40" y="672" width="6" height="10" rx="3" fill="none" stroke="#a0a0a0" stroke-width="1.3"/>
<path d="M37,679 Q37,686 43,686 Q49,686 49,679 M43,686 L43,689 M40,689 L46,689" stroke="#a0a0a0" fill="none" stroke-width="1.1" />
<path d="M81.5,673.5 L78.5,673.5 L78.5,684.5 L81.5,684.5 M94.5,673.5 L97.5,673.5 L97.5,684.5 L94.5,684.5" stroke="#fff" fill="none" stroke-width="1.1" />
<rect x="82.5" y="672.5" width="11" height="13" fill="none" stroke="#fff" stroke-width="1.1"/>
<linearGradient id="scr" x1="0" y1="0" x2="1" y2="1"><stop offset="0" stop-color="#1c3cc0"/><stop offset="0.6" stop-color="#5a8ae8"/><stop offset="1" stop-color="#d0e0ff"/></linearGradient>
<path d="M129,669 L148,667 L149,686 L130,685 Z" fill="#c8d0dc" shape-rendering="geometricPrecision"/>
<path d="M131,671 L146,669.5 L147,683.5 L132,683 Z" fill="url(#scr)" shape-rendering="geometricPrecision"/>
<ellipse cx="141" cy="689" rx="6" ry="2.2" fill="#b8a890" shape-rendering="geometricPrecision"/>
<circle cx="133" cy="682" r="4" fill="#8aa8c8" stroke="#e0e8f0" stroke-width="1.2" shape-rendering="geometricPrecision"/>
<rect x="179" y="667" width="17" height="23" fill="#fff"/>
<rect x="181" y="669" width="13" height="4" fill="#1a1a1a" />
<rect x="181.0" y="675.0" width="2" height="2" fill="#1a1a1a" />
<rect x="184.5" y="675.0" width="2" height="2" fill="#1a1a1a" />
<rect x="188.0" y="675.0" width="2" height="2" fill="#1a1a1a" />
<rect x="191.5" y="675.0" width="2" height="2" fill="#1a1a1a" />
<rect x="181.0" y="678.6" width="2" height="2" fill="#1a1a1a" />
<rect x="184.5" y="678.6" width="2" height="2" fill="#1a1a1a" />
<rect x="188.0" y="678.6" width="2" height="2" fill="#1a1a1a" />
<rect x="191.5" y="678.6" width="2" height="2" fill="#1a1a1a" />
<rect x="181.0" y="682.2" width="2" height="2" fill="#1a1a1a" />
<rect x="184.5" y="682.2" width="2" height="2" fill="#1a1a1a" />
<rect x="188.0" y="682.2" width="2" height="2" fill="#1a1a1a" />
<rect x="191.5" y="682.2" width="2" height="2" fill="#1a1a1a" />
<rect x="181.0" y="685.8" width="2" height="2" fill="#1a1a1a" />
<rect x="184.5" y="685.8" width="2" height="2" fill="#1a1a1a" />
<rect x="188.0" y="685.8" width="2" height="2" fill="#1a1a1a" />
<rect x="191.5" y="685.8" width="2" height="2" fill="#1a1a1a" />
<path d="M226,672 L233,672 L235,674 L248,674 L248,688 L226,688 Z" fill="#f3c84a"/>
<rect x="231" y="679" width="13" height="6" fill="#2f8ad8"/>
<rect x="234" y="682" width="7" height="6" fill="#f3c84a" />
<circle cx="285.5" cy="678.5" r="11" fill="#2ea6e0"/>
<path d="M279,678 L291,673 L289,685 L285,682 L283,685 L283,681 Z" stroke="none" fill="#fff" stroke-width="1" />
<circle cx="335" cy="678.5" r="11" fill="#dd4a3a"/>
<path d="M335,678.5 L345.5,675 A11,11 0 0 1 340,688 Z" stroke="none" fill="#fbc02d" stroke-width="1" />
<path d="M335,678.5 L340,688 A11,11 0 0 1 324.5,674.5 Z" stroke="none" fill="#2ea44f" stroke-width="1" />
<circle cx="335" cy="678.5" r="5" fill="#fff"/><circle cx="335" cy="678.5" r="3.8" fill="#4a84e8"/>
<ellipse cx="382" cy="677" rx="10" ry="7" fill="#f0e8e8" stroke="#c04050" stroke-width="2" transform="rotate(-25 382 677)"/>
<path d="M380,672 L390,686 M388,672 L382,686" stroke="#2a70c0" fill="none" stroke-width="1.5" />
<circle cx="381" cy="687" r="2" fill="none" stroke="#2a70c0" stroke-width="1.3"/><circle cx="391" cy="687" r="2" fill="none" stroke="#2a70c0" stroke-width="1.3"/>
<rect x="409" y="659" width="48" height="40" fill="#3c3c3c" />
<rect x="427" y="669" width="16" height="15" fill="#a8c8ec" stroke="#6090c8"/>
<circle cx="428" cy="680" r="3" fill="#e8b890"/><path d="M422,689 Q428,682 434,689 Z" fill="#4a9a4a"/>
<rect x="473" y="670" width="18" height="18" fill="#ffffff" />
<path d="M483,688 L491,680 L491,688 Z" stroke="none" fill="#111" stroke-width="1" />
<rect x="218" y="697" width="39" height="2" fill="#7ab8ea" />
<rect x="316" y="697" width="39" height="2" fill="#7ab8ea" />
<rect x="409" y="697" width="48" height="2" fill="#7ab8ea" />
<rect x="463" y="697" width="43" height="2" fill="#7ab8ea" />
<path d="M831,681 L837,675 L843,681" stroke="#fff" fill="none" stroke-width="1.3" />
<rect x="859.5" y="675.5" width="9" height="7" fill="none" stroke="#fff"/>
<rect x="861" y="677" width="5" height="4" fill="#fff" />
<rect x="869" y="677" width="1" height="4" fill="#fff" />
<path d="M853,678.5 L859,678.5" stroke="#fff" fill="none" stroke-width="1.2" />
<rect x="855" y="675" width="2" height="7" fill="#fff" />
<rect x="853" y="676" width="2" height="1" fill="#fff" />
<rect x="853" y="680" width="2" height="1" fill="#fff" />
<path d="M881,686 A11,11 0 0 1 892,675 M884,686 A8,8 0 0 1 892,678 M887,686 A5,5 0 0 1 892,681" stroke="#d0d0d0" fill="none" stroke-width="1.2" />
<circle cx="891" cy="685" r="1.5" fill="#fff"/>
<path d="M901,676 L904,676 L908,672 L908,686 L904,682 L901,682 Z" stroke="#fff" fill="none" stroke-width="1.1" />
<path d="M911,676 Q913,679 911,682 M913,674 Q916,679 913,684 M915,672 Q919,679 915,686" stroke="#fff" fill="none" stroke-width="1.1" />
<text x="953" y="674" font-family="Liberation Sans" font-size="12" fill="#f0f0f0" text-anchor="middle" font-weight="normal" textLength="48" lengthAdjust="spacing" >10:42 AM</text>
<text x="953" y="692" font-family="Liberation Sans" font-size="12" fill="#f0f0f0" text-anchor="middle" font-weight="normal" textLength="46" lengthAdjust="spacing" >3/4/2022</text>
<path d="M997,671 L1012,671 L1012,684 L1003,684 L999,688 L999,684 L997,684 Z" stroke="none" fill="#fff" stroke-width="1" />
<path d="M1000,675 L1009,675 M1000,678 L1009,678 M1000,681 L1007,681" stroke="#333" fill="none" stroke-width="1" />
<circle cx="1012" cy="686.5" r="7.5" fill="#2a2a2a" stroke="#888" stroke-width="1.3"/>
<text x="1012" y="691" font-family="Liberation Sans" font-size="10" fill="#fff" text-anchor="middle" font-weight="normal" >1</text>
<rect x="1034" y="659" width="1" height="40" fill="#3a3a3a" />
</svg></body></html>
